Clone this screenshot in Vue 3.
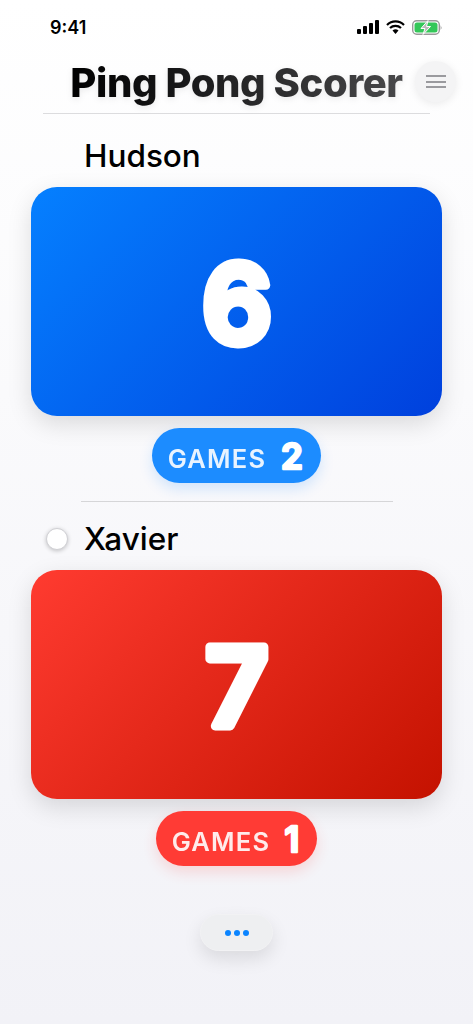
<script setup>
const players = [
  { name: 'Hudson', score: 6, games: 2, gamesWidth: 24, color: 'blue', serving: false },
  { name: 'Xavier', score: 7, games: 1, gamesWidth: 16, color: 'red', serving: true },
]
</script>

<template>
  <div class="screen">
    <div class="status">
      <span class="time">9:41</span>
      <div class="status-icons">
        <svg width="22" height="14" viewBox="0 0 22 14"><rect x="0" y="9" width="4" height="5" rx="1" /><rect x="6" y="6" width="4" height="8" rx="1" /><rect x="12" y="3" width="4" height="11" rx="1" /><rect x="18" y="0" width="4" height="14" rx="1" /></svg>
        <svg width="19" height="14" viewBox="0 0 19 14"><path d="M1 5 A12 12 0 0 1 18 5" fill="none" stroke="#000" stroke-width="2.2" /><path d="M4 8 A8 8 0 0 1 15 8" fill="none" stroke="#000" stroke-width="2.2" /><path d="M9.5 14 L6.5 10.5 A4.5 4.5 0 0 1 12.5 10.5 Z" /></svg>
        <svg width="31" height="15" viewBox="0 0 31 15"><rect x="0.7" y="0.7" width="26.6" height="13.6" rx="4" fill="none" stroke="#9a9a9a" stroke-width="1.4" /><rect x="2.5" y="2.5" width="23" height="10" rx="2.5" fill="#34c759" /><path d="M28.6 5 Q30.4 7.5 28.6 10 Z" fill="#9a9a9a" /><path d="M16 0.5 L9 8.5 H13 L11 14.5 L18.5 6.5 H14.5 Z" fill="#b9b9b9" stroke="#fff" stroke-width="1" /></svg>
      </div>
    </div>

    <div class="title-row">
      <h1 class="title">Ping Pong Scorer</h1>
      <button class="menu"><span></span><span></span><span></span></button>
    </div>
    <div class="title-rule"></div>

    <section v-for="(p, i) in players" :key="p.name" class="player" :class="{ first: i === 0 }">
      <div class="name-row">
        <span class="serve" :class="{ on: p.serving }"></span>
        <span class="name">{{ p.name }}</span>
      </div>
      <div class="card" :class="p.color">
        <svg class="digit" width="140" height="190" viewBox="0 0 140 190">
          <text x="70" y="136" text-anchor="middle">{{ p.score }}</text>
        </svg>
      </div>
      <div class="pill" :class="p.color">
        <span class="label">GAMES</span>
        <svg class="count" :width="p.gamesWidth" height="50" :viewBox="`0 0 ${p.gamesWidth} 50`">
          <text :x="p.gamesWidth / 2" y="38" text-anchor="middle">{{ p.games }}</text>
        </svg>
      </div>
      <div v-if="i === 0" class="divider"></div>
    </section>

    <button class="more"><i></i><i></i><i></i></button>
  </div>
</template>

<style scoped>
.screen {
  width: 473px;
  height: 1024px;
  overflow: hidden;
  background: linear-gradient(180deg, #ffffff 0%, #f2f2f7 100%);
  font-family: Inter, "Liberation Sans", sans-serif;
  color: #000;
  display: flex;
  flex-direction: column;
}
.status {
  height: 54px;
  padding: 0 30px 0 50px;
  display: flex;
  align-items: center;
  justify-content: space-between;
}
.time { font-size: 18px; font-weight: 600; }
.status-icons { display: flex; align-items: center; gap: 7px; }
.title-row {
  height: 58px;
  position: relative;
  display: flex;
  justify-content: center;
  align-items: center;
}
.title {
  margin: 0 0 2px;
  font-size: 40px;
  font-weight: 800;
  letter-spacing: -0.4px;
  background: linear-gradient(90deg, #000, #48484a);
  -webkit-background-clip: text;
  background-clip: text;
  color: transparent;
  filter: drop-shadow(0 2px 3px rgba(0,0,0,.08));
}
.menu {
  position: absolute;
  right: 17px;
  top: 7px;
  width: 41px;
  height: 41px;
  border: 0;
  border-radius: 50%;
  background: #f4f4f5;
  box-shadow: 0 2px 8px rgba(0,0,0,.08);
  display: flex;
  flex-direction: column;
  gap: 3.5px;
  align-items: center;
  justify-content: center;
  padding: 0;
}
.menu span { width: 20px; height: 2px; background: #9a9a9e; }
.title-rule { height: 1px; background: #dcdcde; margin: 1px 43px 0; }
.player { display: flex; flex-direction: column; align-items: center; }
.player.first { padding-top: 5px; }
.name-row {
  align-self: stretch;
  height: 68px;
  padding: 5px 0 0 46px;
  box-sizing: border-box;
  display: flex;
  align-items: center;
  gap: 16px;
}
.serve { width: 22px; height: 22px; box-sizing: border-box; border-radius: 50%; visibility: hidden; }
.serve.on { visibility: visible; background: #fff; border: 1px solid #d0d0d4; box-shadow: 0 1px 4px rgba(0,0,0,.22); }
.name { font-size: 31.5px; font-weight: 500; }
.card {
  width: 411px;
  height: 229px;
  border-radius: 26px;
  display: flex;
  align-items: center;
  justify-content: center;
  box-shadow: 0 8px 24px rgba(0,0,0,.13);
}
.card.blue { background: linear-gradient(135deg, #0580ff, #0040dd); }
.card.red { background: linear-gradient(135deg, #ff3b30, #c41200); }
.digit text {
  font-size: 109px;
  font-weight: 600;
  fill: #fff;
  stroke: #fff;
  stroke-width: 9px;
  stroke-linejoin: round;
}
.pill {
  margin-top: 12px;
  height: 55px;
  border-radius: 28px;
  padding: 0 17px 0 16px;
  display: flex;
  align-items: center;
  gap: 14px;
  color: #fff;
}
.pill.blue { background: #1c8cff; box-shadow: 0 6px 14px rgba(0,122,255,.16); }
.pill.red { background: #ff3b35; box-shadow: 0 6px 14px rgba(255,59,48,.16); }
.label { padding-top: 5px; font-size: 25.5px; font-weight: 600; letter-spacing: 1.2px; opacity: .9; }
.count text {
  font-size: 35px;
  font-weight: 600;
  fill: #fff;
  stroke: #fff;
  stroke-width: 2.6px;
  stroke-linejoin: round;
}
.divider { width: 312px; height: 1px; background: #d6d6d8; margin-top: 18px; }
.more {
  align-self: center;
  margin-top: 48px;
  width: 73px;
  height: 37px;
  border: 1px solid #f2f2f4;
  border-radius: 19px;
  background: #eeeff1;
  box-shadow: 0 8px 18px rgba(0,0,0,.1);
  display: flex;
  gap: 3px;
  align-items: center;
  justify-content: center;
  padding: 0;
}
.more i { width: 6px; height: 6px; border-radius: 50%; background: #0a84ff; }
</style>
